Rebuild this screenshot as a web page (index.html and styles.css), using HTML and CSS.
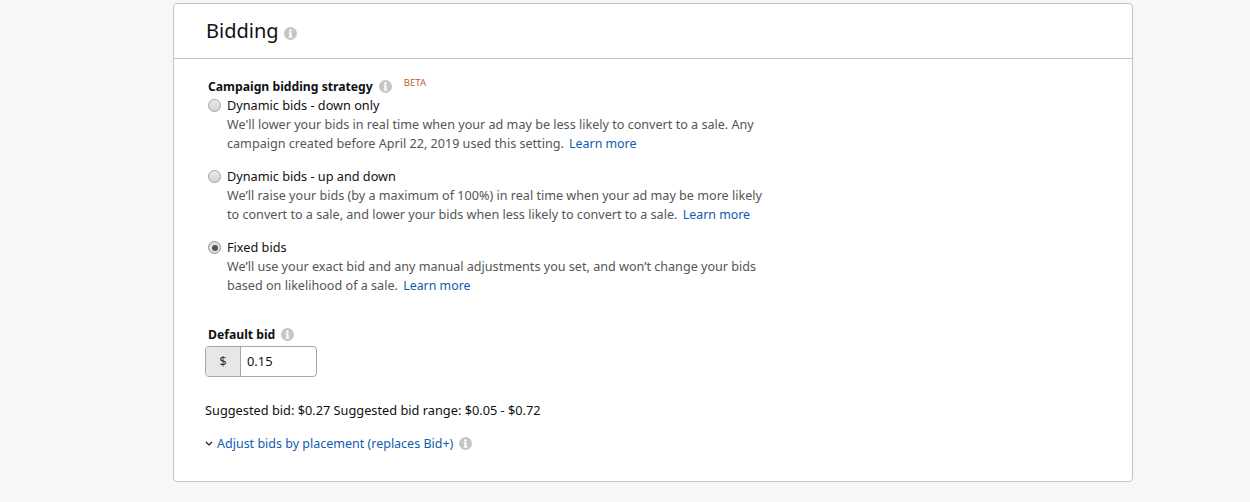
FILE: index.html
```html
<!DOCTYPE html>
<html lang="en">
<head>
<meta charset="utf-8">
<title>Bidding</title>
<link rel="stylesheet" href="styles.css">
</head>
<body>
<svg class="defs" width="0" height="0" aria-hidden="true"><defs>
<symbol id="info" viewBox="0 0 13 13"><circle cx="6.5" cy="6.5" r="6.5" fill="#c4c6c6"/><rect x="5.4" y="5.4" width="2.2" height="5" fill="#fff"/><rect x="4.6" y="5.4" width="2" height="1" fill="#fff"/><rect x="4.6" y="9.6" width="3.8" height="1" fill="#fff"/><circle cx="6.4" cy="3.4" r="1.25" fill="#fff"/></symbol>
</defs></svg>
<main class="card">
  <header class="card-head">
    <h1 class="title">Bidding</h1>
    <svg class="info info-title"><use href="#info"/></svg>
  </header>
  <section class="card-body">
    <div class="strategy-label">
      <span class="label">Campaign bidding strategy</span>
      <svg class="info"><use href="#info"/></svg>
      <span class="beta">BETA</span>
    </div>
    <div class="option">
      <span class="radio"></span>
      <div class="option-text">
        <div class="option-name">Dynamic bids - down only</div>
        <p class="option-desc">We'll lower your bids in real time when your ad may be less likely to convert to a sale. Any campaign created before April 22, 2019 used this setting. <a class="link" href="#">Learn more</a></p>
      </div>
    </div>
    <div class="option">
      <span class="radio"></span>
      <div class="option-text">
        <div class="option-name">Dynamic bids - up and down</div>
        <p class="option-desc">We’ll raise your bids (by a maximum of 100%) in real time when your ad may be more likely to convert to a sale, and lower your bids when less likely to convert to a sale. <a class="link" href="#">Learn more</a></p>
      </div>
    </div>
    <div class="option">
      <span class="radio radio-on"></span>
      <div class="option-text">
        <div class="option-name">Fixed bids</div>
        <p class="option-desc">We’ll use your exact bid and any manual adjustments you set, and won’t change your bids based on likelihood of a sale. <a class="link" href="#">Learn more</a></p>
      </div>
    </div>
    <div class="bid-label">
      <span class="label">Default bid</span>
      <svg class="info"><use href="#info"/></svg>
    </div>
    <div class="bid-input">
      <span class="prefix">$</span>
      <span class="value">0.15</span>
    </div>
    <p class="suggested">Suggested bid: $0.27 Suggested bid range: $0.05 - $0.72</p>
    <div class="adjust">
      <svg class="chevron" viewBox="0 0 8 5"><path d="M1 1l3 3 3-3" fill="none" stroke="#111" stroke-width="1.1"/></svg>
      <a class="link" href="#">Adjust bids by placement (replaces Bid+)</a>
      <svg class="info"><use href="#info"/></svg>
    </div>
  </section>
</main>
</body>
</html>
```
FILE: styles.css
```css
* { box-sizing: border-box; }
html, body { margin: 0; height: 502px; overflow: hidden; }
body {
  background: #f7f7f7;
  font-family: "Noto Sans", "Liberation Sans", sans-serif;
  font-size: 12.7px;
  line-height: 19px;
  color: #111;
  padding: 3px 117px 0 173px;
}
.defs { position: absolute; }
.card {
  width: 960px;
  height: 479px;
  background: #fff;
  border: 1px solid #c4c4c4;
  border-radius: 4px;
}
.card-head {
  height: 55px;
  border-bottom: 1px solid #c4c4c4;
  padding-left: 32px;
  display: flex;
  align-items: center;
  gap: 5px;
}
.title { margin: 0; font-size: 20px; font-weight: 400; line-height: 28px; }
.info { width: 13px; height: 13px; flex: none; }
.info-title { margin-top: 4px; }
.card-body { padding: 18px 0 0 31px; }
.strategy-label, .bid-label { display: flex; align-items: center; padding-left: 3px; height: 19px; }
.label { font-weight: 700; font-size: 12.2px; }
.strategy-label .info { margin-left: 6px; }
.beta { font-size: 9.6px; color: #c0622a; margin: -8px 0 0 12px; line-height: 12px; }
.option { display: flex; margin-left: 3px; margin-bottom: 14px; }
.radio {
  width: 13px; height: 13px; margin-top: 3px; flex: none;
  border: 1px solid #a0a0a0; border-radius: 50%;
  background: linear-gradient(#ececec, #d2d2d2);
  display: flex; align-items: center; justify-content: center;
}
.radio-on { border-color: #8f8f8f; background: #e0e0e0; }
.radio-on::after { content: ""; width: 6px; height: 6px; border-radius: 50%; background: #555; }
.option-text { margin-left: 6px; width: 545px; }
.option-desc { margin: 0; color: #555; font-size: 12.6px; }
.link { color: #0f5cb0; text-decoration: none; margin-left: 2px; font-size: 12.4px; }
.bid-label { margin-top: 30px; }
.bid-label .info { margin-left: 6px; }
.bid-input {
  display: flex; width: 112px; height: 31px; margin-top: 2px;
  border: 1px solid #a6a6a6; border-radius: 4px; overflow: hidden;
}
.prefix { width: 35px; background: #e7e7e7; border-right: 1px solid #a6a6a6; text-align: center; line-height: 29px; color: #333; font-size: 13px; }
.value { padding-left: 6px; line-height: 29px; font-size: 12.9px; }
.suggested { margin: 24px 0 0; font-size: 12.78px; }
.adjust { display: flex; align-items: center; margin-top: 14px; }
.chevron { width: 8px; height: 5px; margin-right: 4px; }
.adjust .link { margin-left: 0; margin-right: 6px; font-size: 12.5px; }
```
